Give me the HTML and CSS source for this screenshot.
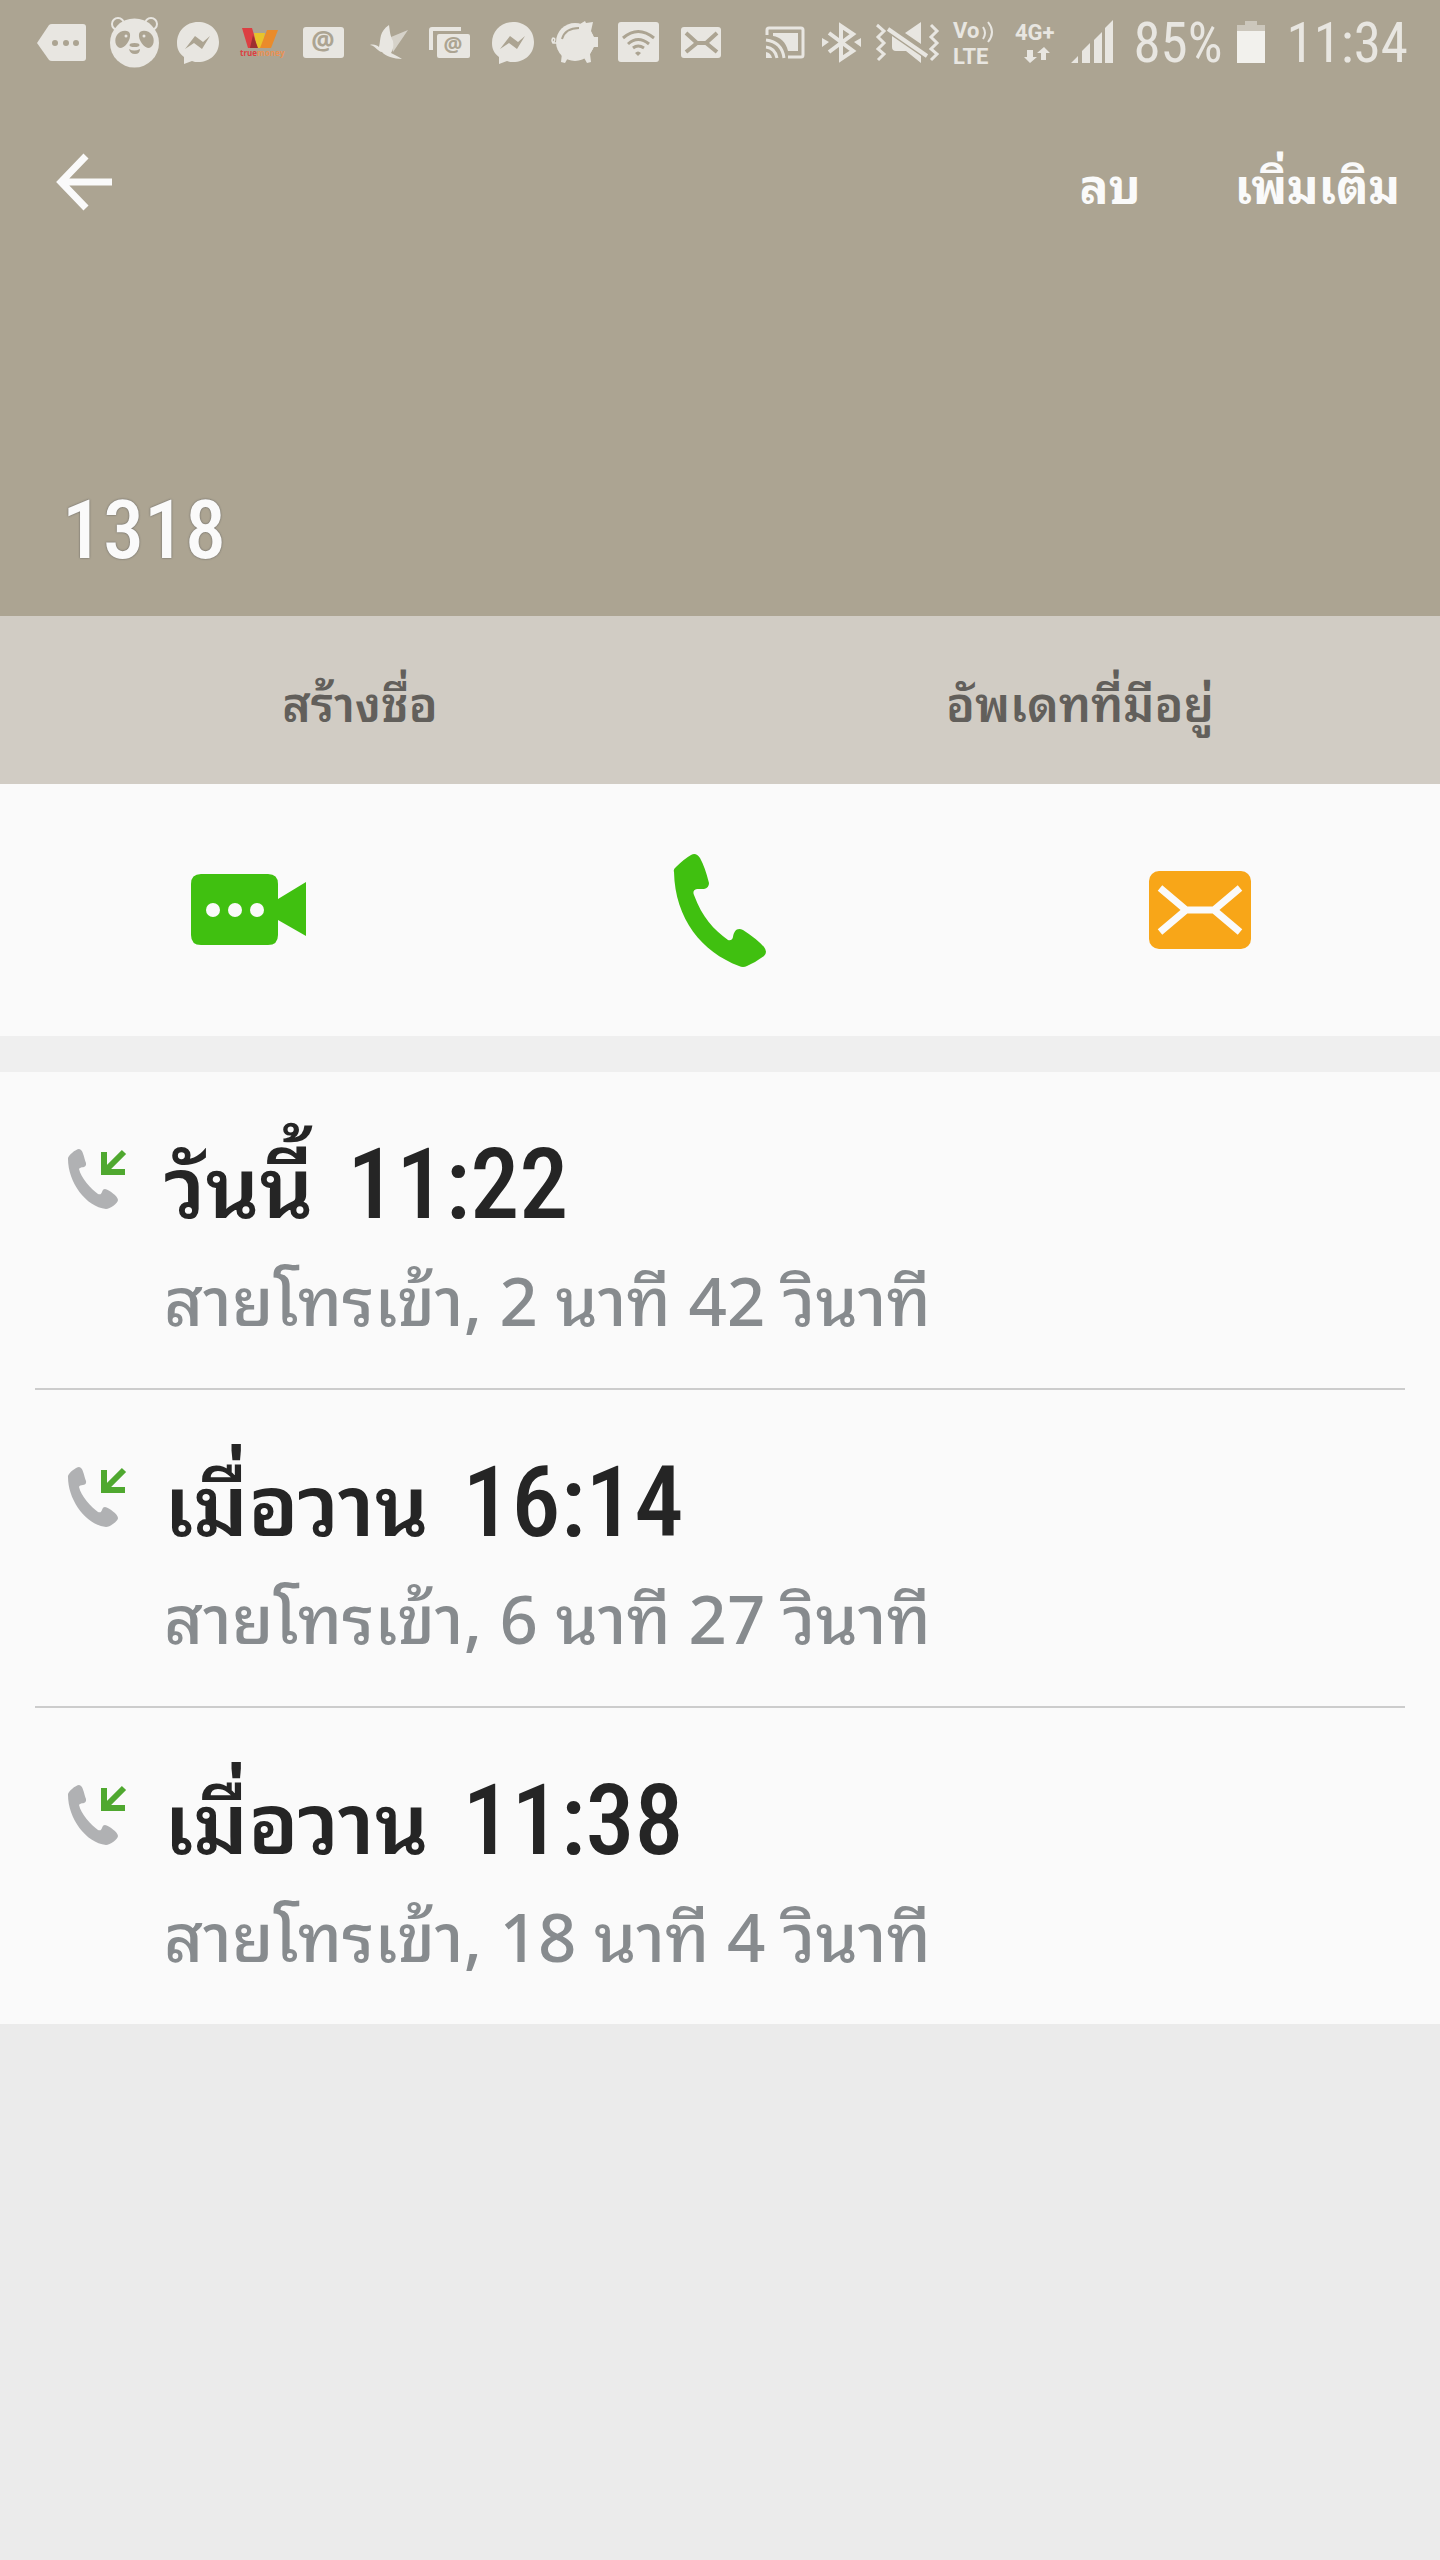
FILE: index.html
```
<!DOCTYPE html>
<html lang="th">
<head>
    <meta charset="UTF-8">
    <meta name="viewport" content="width=device-width, initial-scale=1.0">
    <title>1318</title>
    <link rel="stylesheet" href="styles.css">
</head>
<body>
    <!-- shared shapes -->
    <svg class="defs" width="0" height="0" aria-hidden="true">
        <symbol id="messenger" viewBox="0 0 51 52">
            <path fill="currentColor" d="M26 5C14 5 5 14 5 26c0 6 2 10 7 14v7l8-3c2 1 4 1 6 1 12 0 21-8 21-20S38 5 26 5z"/>
            <path class="cut" d="M13 32l10-13 8 6 7-6-8 13-8-6z"/>
        </symbol>
        <symbol id="incoming" viewBox="0 0 62 64">
            <path fill="#b0b1b3" d="M2 11C1 8 10 1 13 1c4 0 5 9 7 14 1 6-6 3-7 6 2 9 12 20 19 25 5 2 3-5 7-5 4 1 13 7 13 11 0 3-8 9-12 9C20 59 2 34 2 11z"/>
            <path fill="none" stroke="#4fa82f" stroke-width="6" d="M58 4L40 22M38 4v20h21"/>
        </symbol>
    </svg>

    <header class="header">
        <div class="status-bar">
            <div class="status-left">
                <svg width="60" height="52" viewBox="0 0 60 52"><path fill="currentColor" d="M0 26L12 8q1-1 3-1h31q3 0 3 3v31q0 3-3 3H15q-2 0-3-1z"/><g class="cut"><circle cx="18" cy="26" r="3"/><circle cx="29" cy="26" r="3"/><circle cx="39" cy="26" r="3"/></g></svg>
                <svg width="51" height="52" viewBox="0 0 51 52">
                    <g fill="none" stroke="currentColor" stroke-width="2"><circle cx="9" cy="7" r="6"/><circle cx="42" cy="7" r="6"/></g>
                    <circle cx="25.500" cy="26" r="24.500" fill="currentColor"/>
                    <g class="cut"><path d="M8 18c3-5 12-6 13-1 1 6-5 14-10 14-5-1-6-9-3-13zM43 18c-3-5-12-6-13-1-1 6 5 14 10 14 5-1 6-9 3-13z"/><ellipse cx="25.500" cy="28" rx="5" ry="2"/><path d="M20 32q5 3 11 0 0 5-5 5t-6-5z"/></g>
                    <circle cx="17" cy="19" r="1.500" fill="currentColor"/><circle cx="35" cy="19" r="1.500" fill="currentColor"/>
                </svg>
                <svg width="51" height="52"><use href="#messenger"/></svg>
                <svg width="51" height="52" viewBox="0 0 51 52">
                    <path fill="#dc3f42" d="M7 11h10l6 20H13z"/><path fill="#e8c42a" d="M19 16h11l-3 15h-5z"/><path fill="#9d3030" d="M18 18l5 13h-8z"/><path fill="#ea8b2a" d="M32 13h11l-7 18H25z"/>
                    <text class="brand" x="5" y="39"><tspan fill="#dc3f42">true</tspan><tspan fill="#ea9152">money</tspan></text>
                </svg>
                <svg width="51" height="52" viewBox="0 0 51 52"><rect x="5" y="10" width="41" height="31" rx="3" fill="currentColor"/><text class="at cut" x="25" y="33">@</text></svg>
                <svg width="51" height="52" viewBox="0 0 51 52"><path fill="currentColor" opacity=".7" d="M30 20l17-7-15 22z"/><path fill="currentColor" d="M9 28c3-1 7 0 9 2 2-9 0-15 10-22 1 7 1 10 4 16 1 5 0 9-2 12 4 2 8 4 11 6-8 0-17-3-20-7-4 0-6-6-12-7z"/></svg>
                <svg width="51" height="52" viewBox="0 0 51 52"><path fill="currentColor" d="M5 33V13q0-3 3-3h29v4H9v19z"/><rect x="13" y="17" width="33" height="24" rx="2" fill="currentColor"/><text class="at at-small cut" x="29" y="35">@</text></svg>
                <svg width="51" height="52" viewBox="0 0 51 52"><use href="#messenger"/></svg>
                <svg width="51" height="52" viewBox="0 0 51 52">
                    <circle cx="25" cy="25" r="19" fill="currentColor"/><path fill="currentColor" d="M30 7l5-3 1 2 7-1-2 9 3 6h4v10h-4l-4 7 1 8-4 1-4-7H19l-4 7-4-1 1-9z"/>
                    <path fill="none" stroke="#aca492" stroke-width="2" d="M12 22c2-7 8-11 17-11"/><path fill="none" stroke="currentColor" stroke-width="1.500" d="M7 26H3q-2-3 0-5 3 0 1 4H2"/>
                </svg>
                <svg width="51" height="52" viewBox="0 0 51 52"><rect x="5" y="5" width="41" height="40" rx="3" fill="currentColor"/><path fill="none" stroke="#aca492" stroke-width="3" d="M10 21q15-13 31 0M15 27q10-9 21 0M20 31q5-4 11 0"/><path class="cut" d="M22 36q3-3 6 0l-3 3z"/></svg>
                <svg width="51" height="52" viewBox="0 0 51 52"><rect x="5" y="10" width="40" height="31" rx="3" fill="currentColor"/><path fill="none" stroke="#aca492" stroke-width="4" d="M10 16l11 10h9l11-10M10 35l11-9m9 0l11 9"/></svg>
            </div>
            <div class="status-right">
                <svg width="44" height="52" viewBox="0 0 44 52"><path fill="none" stroke="currentColor" stroke-width="3" d="M2 18v-5q0-2 2-2h32q2 0 2 2v25q0 2-2 2H23"/><path fill="currentColor" d="M8 16h25v18H23C21 25 15 20 8 19z"/><path fill="none" stroke="currentColor" stroke-width="3" d="M1 23q16 2 18 18M1 30q9 1 11 11"/><path fill="currentColor" d="M1 35q5 1 6 6H1z"/></svg>
                <svg width="43" height="52" viewBox="0 0 43 52"><path fill="none" stroke="currentColor" stroke-width="4" d="M8 16l24 18-12 8V9l12 8L8 35"/><path fill="currentColor" d="M1 21l7 4-7 5zM40 21l-7 4 7 5z"/></svg>
                <svg width="65" height="52" viewBox="0 0 65 52"><path fill="none" stroke="currentColor" stroke-width="3" d="M1 8l7 6-6 6 6 6-6 6 6 5-6 6M55 8l6 6-6 6 6 6-6 6 6 5-6 6"/><path fill="currentColor" d="M29 16L45 5v22zM16 19l29 20v7L30 34H20q-4 0-4-4z"/><path stroke="currentColor" stroke-width="4" d="M12 12l39 27"/></svg>
                <svg class="net" width="48" height="52" viewBox="0 0 48 52"><text x="0" y="21">Vo</text><path fill="none" stroke="currentColor" stroke-width="2" d="M30 10q4 6 0 12M35 5q8 10 0 20"/><text x="0" y="47">LTE</text></svg>
                <svg class="net" width="46" height="52" viewBox="0 0 46 52"><text x="2" y="23">4G+</text><path fill="currentColor" d="M14 33h6v7h4l-7 6-6-6h3zM28 43v-7h-4l7-6 6 6h-4v7z"/></svg>
                <svg width="46" height="52" viewBox="0 0 46 52"><path fill="currentColor" d="M0 46l7-7v7zM11 46V34l8-8v20zM23 46V23l8-8v31zM34 46V11l8-8v43z"/></svg>
                <span class="status-text">85%</span>
                <svg width="36" height="52" viewBox="0 0 36 52"><path fill="#ccc7bc" d="M2 8h8V4h12v4h8v6H2z"/><path fill="#f2f1ed" d="M2 14h28v32H2z"/></svg>
                <span class="status-text">11:34</span>
            </div>
        </div>
        <div class="toolbar">
            <button class="back" aria-label="กลับ"><svg width="56" height="60" viewBox="0 0 56 60"><path fill="none" stroke="currentColor" stroke-width="7" d="M30 4L5 30l25 26M5 30h51"/></svg></button>
            <div class="menu">
                <button>ลบ</button>
                <button>เพิ่มเติม</button>
            </div>
        </div>
        <h1 class="number">1318</h1>
    </header>

    <nav class="tabs">
        <button>สร้างชื่อ</button>
        <button>อัพเดทที่มีอยู่</button>
    </nav>

    <section class="actions">
        <button aria-label="วิดีโอคอล">
            <svg width="132" height="116" viewBox="0 0 132 116"><path fill="#40c010" d="M27 22h67q10 0 10 10v15l28-17v54l-28-16v15q0 10-10 10H27q-10 0-10-10V32q0-10 10-10z"/><g fill="#fafafa"><circle cx="39" cy="58" r="7"/><circle cx="61" cy="58" r="7"/><circle cx="83" cy="58" r="7"/></g></svg>
        </button>
        <button aria-label="โทร">
            <svg width="96" height="116" viewBox="0 0 96 116"><path fill="#40c010" d="M2 20q-1-3 2-5Q12 7 19 3q5-3 9 3 5 9 9 25 0 5-5 6h-7q-5 1-3 6c8 22 20 35 34 45q4 1 5-3c1-6 4-10 10-7q14 9 21 17 4 5 0 9-8 6-17 10-4 2-8 0C30 100 3 67 2 20z"/></svg>
        </button>
        <button aria-label="ข้อความ">
            <svg width="102" height="116" viewBox="0 0 102 116"><rect y="19" width="102" height="78" rx="10" fill="#f8a618"/><path fill="none" stroke="#fafafa" stroke-width="7" d="M11 36l26 22h28l26-22M11 80l26-22m28 0l26 22"/></svg>
        </button>
    </section>

    <ul class="calls">
        <li class="call">
            <svg class="call-icon" width="62" height="64"><use href="#incoming"/></svg>
            <div>
                <h2>วันนี้ <span class="digits">11:22</span></h2>
                <p>สายโทรเข้า, 2 นาที 42 วินาที</p>
            </div>
        </li>
        <li class="call">
            <svg class="call-icon" width="62" height="64"><use href="#incoming"/></svg>
            <div>
                <h2>เมื่อวาน <span class="digits">16:14</span></h2>
                <p>สายโทรเข้า, 6 นาที 27 วินาที</p>
            </div>
        </li>
        <li class="call">
            <svg class="call-icon" width="62" height="64"><use href="#incoming"/></svg>
            <div>
                <h2>เมื่อวาน <span class="digits">11:38</span></h2>
                <p>สายโทรเข้า, 18 นาที 4 วินาที</p>
            </div>
        </li>
    </ul>
</body>
</html>
```
FILE: styles.css
```
* {
    box-sizing: border-box;
}
body {
    margin: 0;
    background: #ebebeb;
    color: #252525;
    font-family: "Noto Sans Thai Looped", "Noto Sans Thai", "Noto Sans", sans-serif;
}
button {
    padding: 0;
    border: 0;
    background: none;
    color: inherit;
    font: inherit;
    cursor: pointer;
}
svg {
    display: block;
    flex: none;
    overflow: visible;
}
.defs {
    position: absolute;
}
.header {
    background: #aca492;
    color: #fafafa;
}
.status-bar {
    display: flex;
    justify-content: space-between;
    height: 86px;
    padding: 0 32px 0 37px;
    color: #e8e6e1;
}
.status-left,
.status-right {
    display: flex;
    align-items: center;
    gap: 12px;
}
.status-text {
    padding-left: 4px;
    font-family: "Roboto Condensed", Roboto, sans-serif;
    font-size: 55px;
    line-height: 52px;
}
.cut {
    fill: #aca492;
}
.at {
    font: bold 26px "Noto Sans", sans-serif;
    text-anchor: middle;
}
.at-small {
    font-size: 21px;
}
.brand {
    font: bold 8px "Open Sans", sans-serif;
}
.net text {
    fill: currentColor;
    font: bold 22px Roboto, sans-serif;
}
.toolbar {
    display: flex;
    justify-content: space-between;
    align-items: center;
    height: 192px;
    padding: 0 40px 0 56px;
}
.menu {
    display: flex;
    gap: 94px;
    font-size: 48px;
    font-weight: bold;
}
.number {
    margin: 0;
    padding: 196px 62px 30px;
    font-family: "Roboto Condensed", Roboto, sans-serif;
    font-size: 82px;
    font-weight: 500;
    line-height: 112px;
    text-shadow: 0 0 2px #555;
}
.tabs {
    display: grid;
    grid-template-columns: 1fr 1fr;
    height: 168px;
    background: #d1ccc4;
    color: #625f5b;
    font-size: 48px;
    font-weight: 600;
}
.actions {
    display: grid;
    grid-template-columns: repeat(3, 1fr);
    height: 288px;
    border-bottom: 36px solid #efefef;
    background: #fafafa;
}
.actions button {
    display: flex;
    justify-content: center;
    align-items: center;
}
.calls {
    margin: 0;
    padding: 0 35px;
    background: #fafafa;
    list-style: none;
}
.call {
    box-sizing: content-box;
    display: flex;
    gap: 36px;
    height: 264px;
    padding: 52px 31px 0;
}
.call + .call {
    border-top: 2px solid #ccc;
}
.call-icon {
    margin-top: 24px;
}
.call h2 {
    margin: 0;
    font-size: 84px;
    font-weight: 600;
    line-height: 112px;
}
.digits {
    margin-left: 12px;
    font-family: "Roboto Condensed", Roboto, sans-serif;
    font-size: 98px;
    font-weight: 500;
    line-height: 1;
}
.call p {
    margin: 0;
    color: #878b8e;
    font-size: 67px;
    font-weight: 500;
    line-height: 120px;
}
```
